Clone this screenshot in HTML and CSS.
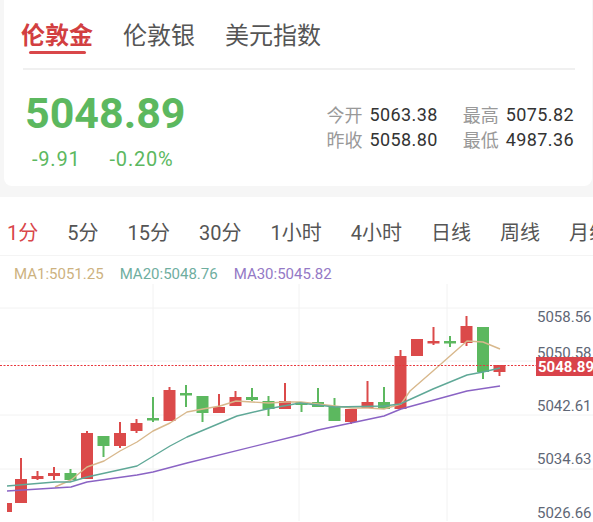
FILE: index.html
```html
<!DOCTYPE html>
<html lang="zh">
<head>
<meta charset="utf-8">
<title>伦敦金</title>
<link rel="stylesheet" href="styles.css">
</head>
<body>
<div class="card">
  <div class="tabs">
    <div class="tab active"><span class="tab-text">伦敦金</span><span class="tab-bar"></span></div>
    <div class="tab"><span class="tab-text">伦敦银</span></div>
    <div class="tab"><span class="tab-text">美元指数</span></div>
  </div>
  <div class="divider"></div>
  <div class="quote">
    <div class="main">
      <div class="price">5048.89</div>
      <div class="chg"><span>-9.91</span><span>-0.20%</span></div>
    </div>
    <div class="stats">
      <span class="lbl">今开</span><span class="val">5063.38</span>
      <span class="lbl">最高</span><span class="val">5075.82</span>
      <span class="lbl">昨收</span><span class="val">5058.80</span>
      <span class="lbl">最低</span><span class="val">4987.36</span>
    </div>
  </div>
</div>
<div class="panel">
  <div class="periods">
    <span class="period active">1分</span>
    <span class="period">5分</span>
    <span class="period">15分</span>
    <span class="period">30分</span>
    <span class="period">1小时</span>
    <span class="period">4小时</span>
    <span class="period">日线</span>
    <span class="period">周线</span>
    <span class="period">月线</span>
  </div>
  <div class="sep"></div>
  <div class="ma">
    <span class="ma1">MA1:5051.25</span>
    <span class="ma20">MA20:5048.76</span>
    <span class="ma30">MA30:5045.82</span>
  </div>
  <svg class="chart" width="593" height="240" viewBox="0 0 593 240">
    <g transform="translate(0,-285)">
      <g class="grid">
        <line x1="0" y1="309" x2="593" y2="309"/>
        <line x1="0" y1="362" x2="593" y2="362"/>
        <line x1="0" y1="416" x2="593" y2="416"/>
        <line x1="0" y1="470" x2="593" y2="470"/>
        <line x1="153" y1="285" x2="153" y2="522"/>
        <line x1="299" y1="285" x2="299" y2="522"/>
        <line x1="447" y1="285" x2="447" y2="522"/>
      </g>
      <g class="up">
        <rect x="7" y="504" width="5" height="9"/>
        <line x1="21" y1="459" x2="21" y2="504"/><rect x="15" y="480" width="12" height="24"/>
        <line x1="37.5" y1="472" x2="37.5" y2="481"/><rect x="31.5" y="477" width="12" height="3"/>
        <line x1="54" y1="468" x2="54" y2="481"/><rect x="48" y="474" width="12" height="3"/>
        <line x1="87" y1="432" x2="87" y2="480"/><rect x="81" y="434" width="12" height="46"/>
        <line x1="120" y1="423" x2="120" y2="449"/><rect x="114" y="434" width="12" height="13"/>
        <line x1="136.5" y1="420" x2="136.5" y2="434"/><rect x="130.5" y="424" width="12" height="8"/>
        <line x1="169.5" y1="388" x2="169.5" y2="422"/><rect x="163.5" y="391" width="12" height="31"/>
        <line x1="219" y1="395" x2="219" y2="414"/><rect x="213" y="408" width="12" height="6"/>
        <line x1="235.5" y1="392" x2="235.5" y2="407"/><rect x="229.5" y="398" width="12" height="9"/>
        <line x1="285" y1="384" x2="285" y2="410"/><rect x="279" y="402" width="12" height="8"/>
        <line x1="351" y1="410" x2="351" y2="425"/><rect x="345" y="410" width="12" height="13"/>
        <line x1="367.5" y1="382" x2="367.5" y2="409"/><rect x="361.5" y="403" width="12" height="6"/>
        <line x1="400.5" y1="351" x2="400.5" y2="410"/><rect x="394.5" y="357" width="12" height="53"/>
        <rect x="411" y="340" width="12" height="17"/>
        <line x1="433.5" y1="328" x2="433.5" y2="346"/><rect x="427.5" y="342" width="12" height="2.5"/>
        <line x1="466.5" y1="317" x2="466.5" y2="347"/><rect x="460.5" y="327" width="12" height="17"/>
        <line x1="499.5" y1="366" x2="499.5" y2="377"/><rect x="493.5" y="366" width="12" height="7"/>
      </g>
      <g class="down">
        <line x1="70.5" y1="470" x2="70.5" y2="481"/><rect x="64.5" y="474" width="12" height="7"/>
        <line x1="103.5" y1="437" x2="103.5" y2="458"/><rect x="97.5" y="437" width="12" height="10"/>
        <line x1="153" y1="398" x2="153" y2="423"/><rect x="147" y="419" width="12" height="2.5"/>
        <line x1="186" y1="386" x2="186" y2="408"/><rect x="180" y="394" width="12" height="2.5"/>
        <line x1="202.5" y1="397" x2="202.5" y2="423"/><rect x="196.5" y="397" width="12" height="17"/>
        <line x1="252" y1="389" x2="252" y2="402"/><rect x="246" y="398" width="12" height="3"/>
        <line x1="268.5" y1="397" x2="268.5" y2="417"/><rect x="262.5" y="402" width="12" height="8"/>
        <line x1="301.5" y1="403" x2="301.5" y2="413"/><rect x="295.5" y="403" width="12" height="3"/>
        <line x1="318" y1="389" x2="318" y2="408"/><rect x="312" y="403" width="12" height="5"/>
        <line x1="334.5" y1="399" x2="334.5" y2="422"/><rect x="328.5" y="408" width="12" height="14"/>
        <line x1="384" y1="388" x2="384" y2="410"/><rect x="378" y="403" width="12" height="7"/>
        <line x1="450" y1="337" x2="450" y2="348"/><rect x="444" y="342" width="12" height="2.5"/>
        <line x1="483" y1="328" x2="483" y2="380"/><rect x="477" y="328" width="12" height="45"/>
      </g>
      <polyline class="l-ma1" points="55,488 71,481 87,468 104,462 120,452 137,443 153,432 170,424 187,413 203,410 220,407 236,402 252,403 269,404 285,403 301,403 318,405 335,407 352,409 368,409 384,410 401,405 410,392 433,372 450,357 467,342 483,343 500,350"/>
      <polyline class="l-ma20" points="7,487 55,483 70,483 87,478 137,467 170,447 187,438 237,417 267,410 300,404 335,408 384,407 400,405 433,390 467,376 483,373 500,369"/>
      <polyline class="l-ma30" points="7,492 55,489 71,488 87,483 137,476 153,473 187,464 300,436 318,431 384,417 401,410 467,392 500,387"/>
      <g class="axis">
        <text x="537" y="323">5058.56</text>
        <text x="537" y="359">5050.58</text>
        <text x="537" y="412">5042.61</text>
        <text x="537" y="465">5034.63</text>
        <text x="537" y="519">5026.66</text>
      </g>
      <line class="cur-line" x1="0" y1="366.5" x2="536" y2="366.5"/>
      <rect class="cur-box" x="536" y="358" width="57" height="19"/>
      <text class="cur-text" x="538" y="373">5048.89</text>
    </g>
  </svg>
</div>
</body>
</html>
```
FILE: styles.css
```css
* { box-sizing: border-box; }
html, body { margin: 0; padding: 0; }
body {
  width: 593px;
  height: 522px;
  overflow: hidden;
  background: #f6f6f6;
  font-family: "Roboto", "Noto Sans CJK SC", sans-serif;
}
.card {
  margin: 0 1px 0 4px;
  background: #fff;
  border-radius: 0 0 8px 8px;
  padding-bottom: 15px;
}
.tabs {
  display: flex;
  gap: 30px;
  padding: 17px 0 0 17px;
}
.tab {
  display: flex;
  flex-direction: column;
  align-items: center;
  font-family: "Noto Sans CJK SC", sans-serif;
  font-size: 24px;
  line-height: 34px;
  color: #555;
}
.tab.active { color: #d23f41; font-weight: 700; }
.tab-bar {
  width: 57px;
  height: 3px;
  border-radius: 2px;
  background: #d9474a;
}
.tab:not(.active) { padding-bottom: 3px; }
.divider {
  height: 2px;
  background: #f0f0f0;
  margin: 14px 17px 0 19px;
}
.quote {
  display: flex;
  justify-content: space-between;
  padding: 18px 18px 0 21px;
}
.price {
  font-size: 43px;
  line-height: 50px;
  font-weight: 700;
  color: #5cb85f;
}
.chg {
  display: flex;
  gap: 29px;
  margin-top: 9px;
  padding-left: 7px;
  font-size: 20px;
  line-height: 24px;
  letter-spacing: 0.8px;
  color: #5cb85f;
}
.stats {
  display: grid;
  grid-template-columns: auto auto auto auto;
  column-gap: 7px;
  margin-top: 14px;
  align-self: flex-start;
  line-height: 25px;
  font-size: 18px;
}
.lbl { color: #999; font-family: "Noto Sans CJK SC", sans-serif; }
.val { color: #333; letter-spacing: 0.4px; }
.stats .lbl:nth-child(3), .stats .lbl:nth-child(7) { margin-left: 18px; }
.panel {
  margin-top: 11px;
  background: #fff;
  padding-top: 22px;
}
.periods {
  display: flex;
  gap: 29px;
  padding-left: 7px;
  white-space: nowrap;
  font-size: 20px;
  line-height: 28px;
  color: #555;
}
.period.active { color: #d9474a; }
.sep {
  height: 1px;
  background: #f4f4f4;
  margin-top: 8px;
}
.ma {
  display: flex;
  gap: 16px;
  padding-left: 14px;
  margin-top: 8px;
  font-size: 15px;
  line-height: 20px;
}
.ma1 { color: #cdb27f; }
.ma20 { color: #6fae9f; }
.ma30 { color: #9479c6; }
.chart { display: block; }
.grid line { stroke: #f2f2f2; stroke-width: 1; }
.up rect { fill: #db4a4a; }
.up line { stroke: #db4a4a; stroke-width: 2; }
.down rect { fill: #5cb85f; }
.down line { stroke: #5cb85f; stroke-width: 2; }
.l-ma1, .l-ma20, .l-ma30 { fill: none; stroke-width: 1.4; stroke-linejoin: round; }
.l-ma1 { stroke: #d8b88c; }
.l-ma20 { stroke: #5fa897; }
.l-ma30 { stroke: #8a63c4; }
.cur-line { stroke: #e8383e; stroke-width: 1; stroke-dasharray: 2 1.5; }
.axis text { font-family: "Roboto", sans-serif; font-size: 15px; fill: #5f6776; }
.cur-box { fill: #d9434a; }
.cur-text { font-family: "Roboto", sans-serif; font-size: 15px; font-weight: 700; fill: #fff; }
```
